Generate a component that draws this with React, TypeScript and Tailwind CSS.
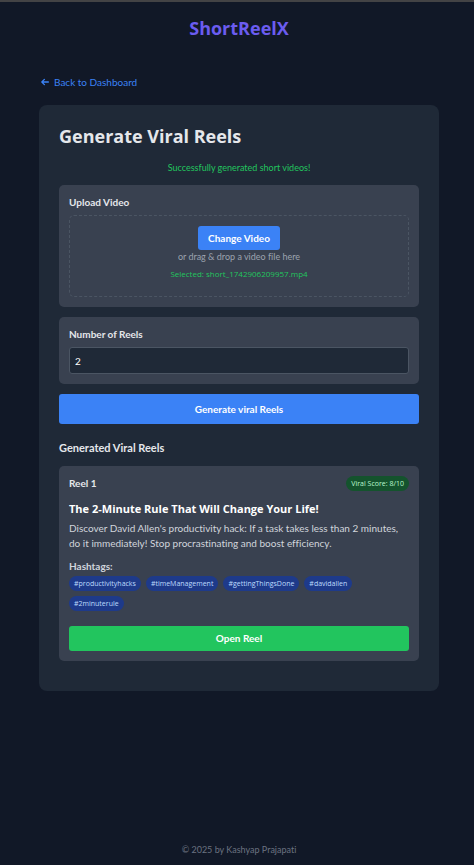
import { useState } from "react";

const hashtags = [
  "#productivityhacks",
  "#timeManagement",
  "#gettingThingsDone",
  "#davidallen",
  "#2minuterule",
];

function UploadPanel() {
  return (
    <section className="rounded-[5px] bg-[#394150] p-2.5">
      <h2 className="text-[10px] leading-[15px] font-bold text-gray-200">Upload Video</h2>
      <div className="mt-[5px] flex h-[82px] flex-col items-center rounded-[5px] border border-dashed border-[#4b5563] pt-2.5 text-[9px] leading-[14px]">
        <button type="button" className="h-6 rounded-[3px] bg-[#3b82f6] px-2.5 text-[10px] font-bold text-white">
          Change Video
        </button>
        <p className="text-[#9ca3af]">or drag &amp; drop a video file here</p>
        <p className="mt-[3px] font-['Open_Sans',sans-serif] text-[8px] text-[#22c55e]">Selected: short_1742906209957.mp4</p>
      </div>
    </section>
  );
}

function CountPanel() {
  const [count, setCount] = useState("2");
  return (
    <section className="rounded-[5px] bg-[#394150] p-2.5">
      <label htmlFor="reel-count" className="block text-[10px] leading-[15px] font-bold text-gray-200">
        Number of Reels
      </label>
      <input
        id="reel-count"
        type="text"
        inputMode="numeric"
        value={count}
        onChange={(e) => setCount(e.target.value)}
        className="mt-[5px] block h-[27px] w-full rounded-[3px] border border-[#4b5563] bg-[#1f2937] px-[5px] text-[10px] text-white outline-none"
      />
    </section>
  );
}

function ReelCard() {
  return (
    <article className="rounded-[5px] bg-[#394150] p-2.5 text-[10px] leading-[15px] text-gray-300">
      <div className="flex items-center justify-between">
        <h3 className="font-bold text-gray-200">Reel 1</h3>
        <span className="rounded-full bg-[#14532d] px-[5px] font-['Open_Sans',sans-serif] text-[7px] leading-[15px] font-medium text-[#bbf7d0]">Viral Score: 8/10</span>
      </div>
      <h4 className="mt-2.5 font-['Open_Sans',sans-serif] text-[11px] leading-[15px] font-bold text-white">The 2-Minute Rule That Will Change Your Life!</h4>
      <p className="mt-[5px]">
        Discover David Allen's productivity hack: If a task takes less than 2 minutes, do it immediately! Stop procrastinating and boost efficiency.
      </p>
      <p className="mt-2 font-bold">Hashtags:</p>
      <ul className="mt-0.5 flex flex-wrap gap-[5px]">
        {hashtags.map((tag) => (
          <li key={tag} className="rounded-full bg-[#1e3a8a] px-[5px] font-['Open_Sans',sans-serif] text-[7px] leading-[15px] font-medium text-[#bfdbfe]">
            {tag}
          </li>
        ))}
      </ul>
      <button type="button" className="mt-[15px] block h-[25px] w-full rounded-[3px] bg-[#22c55e] font-bold text-white">
        Open Reel
      </button>
    </article>
  );
}

export default function App() {
  return (
    <div className="flex min-h-screen flex-col border-t-2 border-[#434345] bg-[#111827] pl-1 font-['Lato','Noto_Sans',sans-serif] [font-variant-ligatures:none]">
      <header className="py-3.5 text-center font-['Open_Sans',sans-serif] text-[18px] leading-6 font-bold text-[#6b5cf0]">ShortReelX</header>
      <main className="mx-auto w-full max-w-[670px] flex-1 px-[35px] pt-5">
        <a href="#dashboard" className="ml-0.5 flex w-fit items-center gap-[5px] text-[10px] leading-4 text-[#3b82f6]">
          <svg viewBox="0 0 8 8" className="size-2" fill="none" stroke="currentColor" strokeWidth="1.3" strokeLinecap="round" strokeLinejoin="round" aria-hidden="true">
            <path d="M7.4 4H.8M3.4 1.4.8 4l2.6 2.6" />
          </svg>
          Back to Dashboard
        </a>
        <div className="mt-[15px] rounded-[8px] bg-[#1f2937] px-5 pt-[19px] pb-[30px]">
          <h1 className="font-['Open_Sans',sans-serif] text-[18px] leading-6 font-bold text-gray-200">Generate Viral Reels</h1>
          <p className="mt-[13px] text-center text-[9px] leading-[14px] text-[#22c55e]">Successfully generated short videos!</p>
          <div className="mt-2.5 flex flex-col gap-2.5">
            <UploadPanel />
            <CountPanel />
            <button type="button" className="h-[30px] w-full rounded-[3px] bg-[#3b82f6] text-[10px] font-bold text-white">
              Generate viral Reels
            </button>
          </div>
          <h2 className="mt-4 mb-2.5 text-[11px] leading-4 font-bold text-gray-200">Generated Viral Reels</h2>
          <ReelCard />
        </div>
      </main>
      <footer className="pb-2 text-center text-[9px] leading-[14px] text-[#6b7280]">© 2025 by Kashyap Prajapati</footer>
    </div>
  );
}
